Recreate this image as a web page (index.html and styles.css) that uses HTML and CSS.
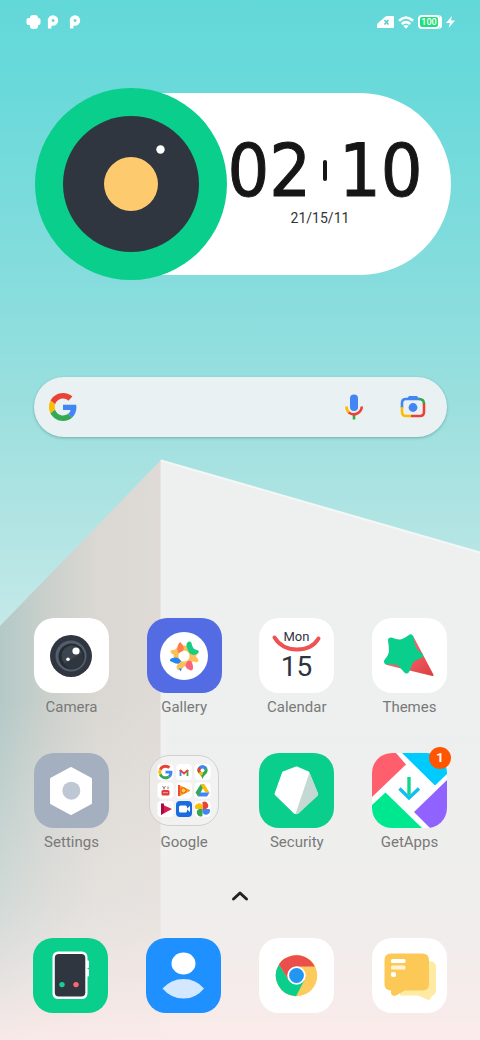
FILE: index.html
```html
<!DOCTYPE html>
<html lang="en">
<head>
  <meta charset="UTF-8">
  <meta name="viewport" content="width=device-width, initial-scale=1.0">
  <link rel="stylesheet" href="styles.css">
  <title>Home screen</title>
</head>
<body>
  <div class="screen">
    <svg class="wallpaper" viewBox="0 0 480 1040" preserveAspectRatio="none" aria-hidden="true">
      <defs>
        <linearGradient id="sky" x1="0" y1="0" x2="0" y2="1">
          <stop offset="0" stop-color="#63d8d9"/>
          <stop offset="0.08" stop-color="#69d9da"/>
          <stop offset="0.3" stop-color="#8bdddd"/>
          <stop offset="0.43" stop-color="#a3e1e0"/>
          <stop offset="0.6" stop-color="#c3e9e8"/>
        </linearGradient>
        <linearGradient id="side" x1="0" y1="0" x2="1" y2="0">
          <stop offset="0" stop-color="#b3c9c6"/>
          <stop offset="0.3" stop-color="#cbd0cc"/>
          <stop offset="0.6" stop-color="#dad8d3"/>
          <stop offset="1" stop-color="#dfdad5"/>
        </linearGradient>
        <linearGradient id="haze" gradientUnits="userSpaceOnUse" x1="0" y1="700" x2="0" y2="1040">
          <stop offset="0" stop-color="#f3ebe9" stop-opacity="0"/>
          <stop offset="0.6" stop-color="#f0ebe9" stop-opacity="0.5"/>
          <stop offset="1" stop-color="#fbebea" stop-opacity="0.95"/>
        </linearGradient>
      </defs>
      <rect width="480" height="1040" fill="url(#sky)"/>
      <path d="M0 626L161 460V1040H0z" fill="url(#side)"/>
      <path d="M160.500 460L480 552V1040H160.500z" fill="#edf0ef"/>
      <path d="M161 460.500L480 552.500" stroke="#f3f7f6" stroke-width="2"/>
      <path d="M161 461h6V1040h-6z" fill="#f2f3f2" opacity="0.4"/>
      <rect y="700" width="480" height="340" fill="url(#haze)"/>
    </svg>

    <div class="content">
      <header class="status-bar">
        <svg width="56" height="16" viewBox="0 0 56 16" fill="#fff" aria-label="Notifications">
          <rect x="4" y="1" width="8" height="14" rx="3"/>
          <rect x="0.500" y="4" width="14" height="7" rx="2"/>
          <g fill="none" stroke="#fff" stroke-width="3.600">
            <circle cx="27" cy="6.500" r="3.400"/>
            <path d="M23.700 6v8.500"/>
            <circle cx="49" cy="6.500" r="3.400"/>
            <path d="M45.700 6v8.500"/>
          </g>
        </svg>
        <div class="status-right">
          <svg width="17" height="12" viewBox="0 0 17 12" aria-label="No SIM">
            <path d="M1 7L8 1Q9 0 10 0h6q1 0 1 1v10q0 1-1 1H1q-1 0-1-1V9q0-1 1-2z" fill="#fff"/>
            <path d="M7.500 4l4 4.500M11.500 4l-4 4.500" stroke="#5fc9ca" stroke-width="1.600"/>
          </svg>
          <svg width="16" height="13" viewBox="0 0 16 13" fill="none" stroke="#fff" stroke-width="2.600" aria-label="Wi-Fi">
            <path d="M1 4.800Q8-1.800 15 4.800M3.800 8Q8 4.200 12.200 8"/>
            <path d="M8 12.800L5.400 9.900Q8 8 10.600 9.900z" fill="#fff" stroke="none"/>
          </svg>
          <div class="battery"><span>100</span></div>
          <svg width="9" height="12" viewBox="0 0 9 12" fill="#fff" aria-label="Charging">
            <path d="M6 0L0 7h4L2.500 12L9 4.500H5z"/>
          </svg>
        </div>
      </header>

      <section class="clock-widget">
        <svg class="disc" viewBox="0 0 192 192" aria-hidden="true">
          <circle cx="96" cy="96" r="96" fill="#0ace8b"/>
          <circle cx="96" cy="96" r="68" fill="#303640"/>
          <circle cx="96" cy="96" r="27" fill="#fdca6e"/>
          <circle cx="125.500" cy="61.500" r="4.200" fill="#fff"/>
        </svg>
        <div class="clock">
          <time class="time"><span>02</span><i class="tick"></i><span>10</span></time>
          <time class="date">21/15/11</time>
        </div>
      </section>

      <form class="search">
        <svg width="28" height="28" viewBox="0 0 48 48" aria-hidden="true">
          <use href="#google-g"/>
        </svg>
        <input type="search" aria-label="Search">
        <button type="button" aria-label="Voice search">
          <svg width="28" height="28" viewBox="0 0 28 28" fill="none">
            <rect x="10" y="1.500" width="8" height="16.500" rx="4" fill="#4285f4"/>
            <path d="M14 21.500v5" stroke="#34a853" stroke-width="2.600"/>
            <path d="M6.500 13.500a8 8 0 0 0 3.200 6.700" stroke="#fbbc04" stroke-width="2.600"/>
            <path d="M8.800 19.500A8 8 0 0 0 21.800 13.500" stroke="#ea4335" stroke-width="2.600"/>
          </svg>
        </button>
        <button type="button" aria-label="Search with camera">
          <svg width="28" height="28" viewBox="0 0 28 28" fill="none" stroke-width="2.600">
            <path d="M3 15V10q0-4 4-4h14" stroke="#4285f4"/>
            <path d="M8 6l2-3h8l2 3z" fill="#4285f4"/>
            <path d="M20 6q5 0 5 5" stroke="#34a853"/>
            <path d="M25 10.500V19q0 4-4 4h-9" stroke="#ea4335"/>
            <path d="M12 23H7q-4 0-4-4v-5" stroke="#fbbc04"/>
            <circle cx="14" cy="14.500" r="4.400" fill="#4285f4"/>
          </svg>
        </button>
      </form>

      <main class="apps">
        <a class="app" href="#camera">
          <svg class="icon white" viewBox="0 0 75 75" aria-hidden="true">
            <circle cx="37" cy="38" r="21" fill="#303640"/>
            <circle cx="37" cy="38" r="15.500" fill="#535e6d"/>
            <circle cx="37.500" cy="38.500" r="13" fill="#252b33"/>
            <circle cx="38" cy="38" r="10.500" fill="#3c444f"/>
            <path d="M30 46a10.500 10.500 0 0 0 18-11z" fill="#30363f"/>
            <circle cx="42" cy="33" r="3.600" fill="#fff"/>
            <circle cx="34" cy="41.300" r="1.800" fill="#fff"/>
          </svg>
          <span>Camera</span>
        </a>
        <a class="app" href="#gallery">
          <svg class="icon indigo" viewBox="0 0 75 75" aria-hidden="true">
            <circle cx="37" cy="38" r="24" fill="#fff"/>
            <circle cx="37" cy="38" r="8" fill="none" stroke="#fdbf5a" stroke-width="5"/>
            <g fill="#fdbf5a">
              <path d="M31 36Q25 38 23.500 34Q23 32 26 32Q29 32 30 29z"/>
              <path d="M43 40Q48 46 51 43.500Q52.500 42 50 40Q48 38 49 35z"/>
              <path d="M34 45Q28 47 30 51Q31 53 33.500 51.500Q37 50 38 46z"/>
              <path d="M37 30Q41 30 42 25L46 34z"/>
              <path d="M44 35l6-1.500q2 0 1.500 1.500L48 39z"/>
            </g>
            <path d="M31.500 35Q29 30 31.500 26Q33 23 34.500 25.500Q38 29 36 33.500z" fill="#ff7d4c"/>
            <path d="M40 30Q38 25 42 23.500Q44.500 23 45 27Q46 31.500 50 32Q53 33 51 35Q46 39 42 34.500z" fill="#12cf84"/>
            <path d="M23 43Q22.500 41 25.500 40Q31 38 34 43Q33 46 28.500 45.500z" fill="#1e88f7"/>
            <path d="M32 50.500h3l-1.500 3z" fill="#1e88f7"/>
            <path d="M40 43.500Q44 41 45.500 46Q47 52 44 52.500Q38.500 51 38.500 47z" fill="#f9637c"/>
            <circle cx="37" cy="38" r="5" fill="#fff"/>
          </svg>
          <span>Gallery</span>
        </a>
        <a class="app" href="#calendar">
          <svg class="icon white" viewBox="0 0 75 75" aria-hidden="true">
            <path d="M15.500 19.500Q23 31.500 38 31.500T59.500 20.500" fill="none" stroke="#ee5253" stroke-width="4" stroke-linecap="round"/>
            <text class="weekday" x="37.500" y="23">Mon</text>
            <text class="day" x="37.500" y="58">15</text>
          </svg>
          <span>Calendar</span>
        </a>
        <a class="app" href="#themes">
          <svg class="icon white" viewBox="0 0 75 75" aria-hidden="true">
            <defs>
              <linearGradient id="cone" x1="0" y1="0" x2="1" y2="1">
                <stop offset="0.4" stop-color="#f4646f"/>
                <stop offset="1" stop-color="#dd3f3f"/>
              </linearGradient>
            </defs>
            <path d="M40.500 19L60.500 57L15 46z" fill="url(#cone)" stroke="url(#cone)" stroke-width="2" stroke-linejoin="round"/>
            <path d="M19 22.500Q24 25 29 24.500Q34 23 38.500 19.500Q39.500 26 41.500 31Q44 35 48 37.500Q42 39.500 39 42Q37 46 34.500 52.500Q31 48 27 44.500Q22 43 15 43.500Q19 39 20 34.500Q20 28 19 22.500z" fill="#0ace8b" stroke="#0ace8b" stroke-width="6" stroke-linejoin="round"/>
          </svg>
          <span>Themes</span>
        </a>
        <a class="app" href="#settings">
          <svg class="icon slate" viewBox="0 0 75 75" aria-hidden="true">
            <path d="M37 15.500L56.500 26V50L37 60.500L17.500 50V26z" fill="#fff" stroke="#fff" stroke-width="3" stroke-linejoin="round"/>
            <circle cx="37.300" cy="37.700" r="9" fill="#bfc7d5"/>
          </svg>
          <span>Settings</span>
        </a>
        <a class="app" href="#google">
          <svg class="icon" viewBox="0 0 75 75" aria-hidden="true">
            <defs>
              <g id="google-g">
                <path fill="#ea4335" d="M24 9.500c3.500 0 6.700 1.200 9.200 3.600l6.900-6.900C35.900 2.400 30.500 0 24 0 14.600 0 6.500 5.400 2.600 13.200l8 6.200C12.400 13.700 17.700 9.500 24 9.500z"/>
                <path fill="#4285f4" d="M47 24.500c0-1.600-.2-3.100-.4-4.500H24v9h12.900c-.6 3-2.300 5.500-4.800 7.200l7.700 6C44.400 38 47 31.800 47 24.500z"/>
                <path fill="#fbbc05" d="M10.500 28.600a14.500 14.500 0 0 1 0-9.200l-8-6.200a24 24 0 0 0 0 21.600l8-6.200z"/>
                <path fill="#34a853" d="M24 48c6.500 0 11.900-2.100 15.900-5.800l-7.700-6c-2.200 1.500-4.900 2.300-8.200 2.300-6.300 0-11.600-4.200-13.500-9.900l-8 6.200C6.500 42.600 14.600 48 24 48z"/>
              </g>
            </defs>
            <rect x="2.500" y="2.500" width="69" height="70" rx="20" fill="#f3f3f3" fill-opacity="0.650" stroke="#cfcfcd"/>
            <g fill="#fff">
              <rect x="10.500" y="11" width="16" height="16" rx="4"/>
              <rect x="29" y="11" width="16" height="16" rx="4"/>
              <rect x="47.500" y="11" width="16" height="16" rx="4"/>
              <rect x="10.500" y="29.500" width="16" height="16" rx="4"/>
              <rect x="29" y="29.500" width="16" height="16" rx="4"/>
              <rect x="47.500" y="29.500" width="16" height="16" rx="4"/>
              <rect x="10.500" y="48" width="16" height="16" rx="4"/>
              <rect x="47.500" y="48" width="16" height="16" rx="4"/>
            </g>
            <use href="#google-g" transform="translate(11.300 11.800) scale(0.3)"/>
            <!-- mail -->
            <g fill="none" stroke-width="1.800">
              <path d="M33.500 23v-6" stroke="#4285f4"/>
              <path d="M40.500 23v-6" stroke="#34a853"/>
              <path d="M33 17l4 3.500l4-3.500" stroke="#ea4335"/>
            </g>
            <!-- maps -->
            <path d="M50.300 17.500a5.200 5.200 0 0 1 10.400 0Q60.700 20 58 22Q56 24 55.500 26Q54.500 22.500 52 20.500Q50.300 19 50.300 17.500z" fill="#34a853"/>
            <path d="M51.500 20L57 14L55.500 22L53.700 22.500z" fill="#fbbc04"/>
            <path d="M51.500 14.300L55.500 17.500L51.500 20Q49.500 17 51.500 14.300z" fill="#ea4335"/>
            <path d="M51.500 14.300Q53 12.300 55.500 12.300Q58.500 12.300 60 14.800L55.500 18z" fill="#4285f4"/>
            <circle cx="55.500" cy="17.300" r="1.900" fill="#fff"/>
            <!-- video -->
            <rect x="14.500" y="37" width="8" height="5.500" rx="1.500" fill="#e23b3b"/>
            <path d="M15.500 33l1.500 2.500l1.500-2.500M17 35v1.500M21 33.500v2.500" fill="none" stroke="#867070" stroke-width="0.900"/>
            <path d="M16 39.700h5" stroke="#f4a0a0"/>
            <!-- music -->
            <path d="M32 32.500L43 37.500L32 43z" fill="#fb9a1d" stroke="#fb9a1d" stroke-linejoin="round"/>
            <path d="M32 32v11" stroke="#ee4a34" stroke-width="2"/>
            <circle cx="36.500" cy="37.500" r="2.600" fill="#ffcf3e" stroke="#e8531e"/>
            <!-- drive -->
            <path d="M53.500 31.500h4L53 41l-2 2.500l-2.500-4z" fill="#34a853"/>
            <path d="M53.500 31.500h4l5 8h-4z" fill="#fbbc05"/>
            <path d="M53 39.500h9.500l-2.500 4h-9z" fill="#4285f4"/>
            <!-- films -->
            <path d="M14 51L25 56L14 62z" fill="#d81d4c"/>
            <path d="M14 50.500h3v9l-3 2.500z" fill="#a30d43"/>
            <!-- calls -->
            <rect x="29" y="48" width="16" height="16" rx="4" fill="#1a6be0"/>
            <rect x="32" y="52.500" width="8" height="7" rx="1.500" fill="#fff"/>
            <path d="M39.500 56l3.500-3v6z" fill="#fff"/>
            <!-- photos -->
            <path d="M55.500 49v7h3.500a3.500 3.500 0 0 0-3.500-7z" fill="#ea4335"/>
            <path d="M62.500 56h-7v3.500a3.500 3.500 0 0 0 7-3.500z" fill="#4285f4"/>
            <path d="M55.500 63v-7h-3.500a3.500 3.500 0 0 0 3.500 7z" fill="#34a853"/>
            <path d="M48.500 56h7v-3.500a3.500 3.500 0 0 0-7 3.500z" fill="#fbbc05"/>
          </svg>
          <span>Google</span>
        </a>
        <a class="app" href="#security">
          <svg class="icon green" viewBox="0 0 75 75" aria-hidden="true">
            <path d="M37.500 15L49 20L57.500 41L38 59.500H36L17 41L24.500 20z" fill="#fff" stroke="#fff" stroke-width="3" stroke-linejoin="round"/>
            <path d="M50.500 19.500L59 40.500Q59.500 42 58.500 43L39.500 60.500Q38 61.500 36.500 61z" fill="#c4d8d4"/>
          </svg>
          <span>Security</span>
        </a>
        <a class="app" href="#getapps">
          <svg class="icon white" viewBox="0 0 75 75" aria-hidden="true">
            <path d="M0 0H24L34 11.500L0 44z" fill="#ff5f6d"/>
            <path d="M30 0H75V21L63 32.500z" fill="#00cbff"/>
            <path d="M75 27V75H58L42 59z" fill="#9062ff"/>
            <path d="M13.500 39.500L50 75H0V52z" fill="#00e88f"/>
            <path d="M27.500 35.500L37 45L47 35.500" fill="none" stroke="#11bdf2" stroke-width="3.400"/>
            <path d="M37 24v18" stroke="#10d68c" stroke-width="3.400"/>
          </svg>
          <b class="badge">1</b>
          <span>GetApps</span>
        </a>
      </main>

      <button class="drawer" type="button" aria-label="All apps">
        <svg width="18" height="12" viewBox="0 0 18 12" fill="none" stroke="#222" stroke-width="3" stroke-linecap="round" stroke-linejoin="round">
          <path d="M2.500 9L9 3l6.500 6"/>
        </svg>
      </button>

      <nav class="dock">
        <a href="#phone" aria-label="Phone">
          <svg class="icon green" viewBox="0 0 75 75">
            <rect x="19.500" y="13.500" width="35" height="47.500" rx="5.500" fill="#fff"/>
            <rect x="53" y="22.500" width="3" height="7.500" rx="1" fill="#fff"/>
            <rect x="53" y="31" width="3" height="7.500" rx="1" fill="#fff"/>
            <rect x="21.800" y="16" width="30.500" height="42.500" rx="4" fill="#303640"/>
            <circle cx="29" cy="46.600" r="2.700" fill="#16cf99"/>
            <circle cx="43" cy="46.600" r="2.700" fill="#ff666d"/>
          </svg>
        </a>
        <a href="#contacts" aria-label="Contacts">
          <svg class="icon blue" viewBox="0 0 75 75">
            <ellipse cx="37.500" cy="25.500" rx="12" ry="11" fill="#fff"/>
            <path d="M16.500 50.500Q25 41 37.500 41T58 50.500Q50 60.500 37.500 60.500T16.500 50.500z" fill="#d3e8ff"/>
          </svg>
        </a>
        <a href="#chrome" aria-label="Chrome">
          <svg class="icon white" viewBox="0 0 75 75">
            <circle cx="37.500" cy="37.500" r="20.700" fill="#fdca5c"/>
            <path d="M37.500 37.500L20 26.500A20.700 20.700 0 0 1 55.700 28.500H37.500z" fill="#ea4f4b"/>
            <path d="M29.500 42L20 26.500A20.700 20.700 0 0 0 37 58.200L45.500 42z" fill="#0ace8b"/>
            <path d="M20 26.500A20.700 20.700 0 0 1 26 20.300L34 34L29 41z" fill="#ea4f4b"/>
            <circle cx="37.500" cy="37.500" r="9.200" fill="#fff"/>
            <circle cx="37.500" cy="37.500" r="7.400" fill="#2196f3"/>
          </svg>
        </a>
        <a href="#messages" aria-label="Messages">
          <svg class="icon white" viewBox="0 0 75 75">
            <path d="M28 23.500H58.500Q64 23.500 64 29V52Q64 56.500 60 58L58.500 60.500Q57 63 54 61L46 57.500H28z" fill="#ffeaa4"/>
            <path d="M19 15.500H50.500Q57 15.500 57 22V46Q57 52.500 50.500 52.500H33L24 57.500Q20.500 59 19 55.500V52.500Q12.500 52 12.500 46V22Q12.500 15.500 19 15.500z" fill="#fdc956"/>
            <rect x="19" y="21" width="14.500" height="4" rx="1.500" fill="#fff"/>
            <rect x="19" y="27.500" width="14.500" height="4" rx="1.500" fill="#fff3d5"/>
            <rect x="19" y="34" width="5" height="5" rx="2" fill="#fff"/>
          </svg>
        </a>
      </nav>
    </div>
  </div>
</body>
</html>
```
FILE: styles.css
```css
* {
  box-sizing: border-box;
}

body {
  margin: 0;
  font-family: Roboto, "Liberation Sans", sans-serif;
}

/* wallpaper and content share one grid cell */
.screen {
  display: grid;
  grid-template-columns: 1fr;
  min-height: 100vh;
}

.wallpaper,
.content {
  grid-area: 1 / 1;
}

.wallpaper {
  display: block;
  width: 100%;
  height: 100%;
}

.content {
  z-index: 1;
  display: flex;
  flex-direction: column;
  min-width: 0;
  padding-bottom: 27px;
}

.content svg {
  display: block;
  flex: none;
}

.status-bar {
  display: flex;
  justify-content: space-between;
  align-items: center;
  height: 44px;
  padding: 0 25px 0 26px;
}

.status-right {
  display: flex;
  align-items: center;
  gap: 4px;
}

.battery {
  display: flex;
  align-items: center;
  border-right: 2px solid #fff;
  border-radius: 4px;
}

.battery span {
  width: 22px;
  border: 2px solid #fff;
  border-radius: 4px;
  background-color: #1fe07d;
  color: #fff;
  font-size: 9px;
  font-weight: 500;
  line-height: 10px;
  text-align: center;
}

.clock-widget {
  display: flex;
  align-items: center;
  margin-top: 44px;
  padding: 0 29px 0 35px;
}

.disc {
  z-index: 1;
  width: 192px;
  margin-right: -96px;
}

.clock {
  flex: 1;
  display: flex;
  flex-direction: column;
  justify-content: center;
  align-items: center;
  gap: 7px;
  height: 182px;
  padding: 0 28px 0 96px;
  background-color: #fff;
  border-radius: 0 91px 91px 0;
}

.time {
  display: flex;
  align-items: center;
  gap: 12px;
  color: #161616;
  font-family: "DejaVu Sans Condensed", "DejaVu Sans", sans-serif;
  font-size: 73px;
  line-height: 60px;
  -webkit-text-stroke: 1px #161616;
}

.tick {
  width: 4px;
  height: 21px;
  border-radius: 2px;
  background-color: #161616;
}

.date {
  padding-right: 10px;
  color: #333;
  font-size: 14px;
  line-height: 20px;
}

.search {
  display: flex;
  align-items: center;
  height: 60px;
  margin: 97px 33px 0 34px;
  padding: 0 20px 0 15px;
  border-radius: 30px;
  background-color: #eaf1f2;
  box-shadow: 0 1px 3px rgba(0, 60, 60, 0.3);
}

.search input {
  flex: 1;
  min-width: 0;
  height: 40px;
  border: none;
  background: none;
  outline: none;
  font-size: 16px;
}

.search button {
  padding: 0;
  border: none;
  background: none;
}

.search button + button {
  margin-left: 31px;
}

.apps,
.dock {
  display: grid;
  grid-template-columns: repeat(4, 75px);
  justify-content: space-between;
}

.apps {
  row-gap: 36px;
  margin-top: 181px;
  padding: 0 33px 0 34px;
}

.app {
  position: relative;
  color: #797979;
  font-size: 15px;
  line-height: 20px;
  text-align: center;
  text-decoration: none;
}

.app span {
  display: block;
  margin-top: 4px;
}

.icon {
  width: 75px;
  height: 75px;
  border-radius: 20px;
}

.white {
  background-color: #fff;
}

.green {
  background-color: #0ace8b;
}

.indigo {
  background-color: #536be3;
}

.slate {
  background-color: #a4afbf;
}

.blue {
  background-color: #1e90ff;
}

.weekday,
.day {
  fill: #2d3440;
  text-anchor: middle;
}

.weekday {
  font-size: 13px;
}

.day {
  font-size: 28px;
}

.badge {
  position: absolute;
  top: -6px;
  right: -4px;
  width: 22px;
  height: 22px;
  border-radius: 50%;
  background-color: #ff5500;
  color: #fff;
  font-size: 13px;
  line-height: 22px;
}

.drawer {
  align-self: center;
  margin: 32px 0 30px;
  padding: 6px;
  border: none;
  background: none;
}

.dock {
  margin-top: auto;
  padding: 0 33px;
}
```
